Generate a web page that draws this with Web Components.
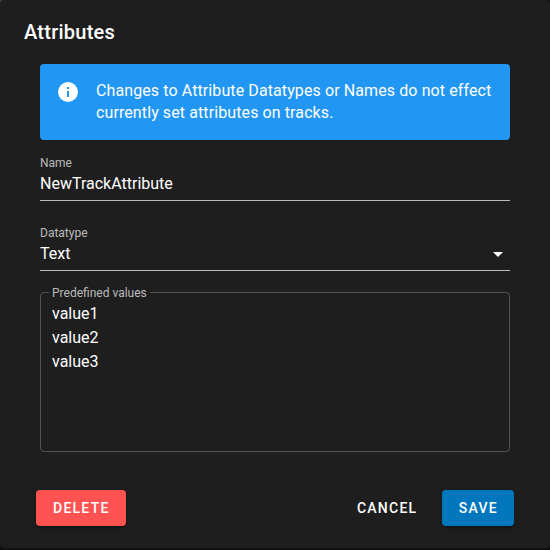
<!DOCTYPE html>
<html lang="en">
<head>
<meta charset="utf-8">
<title>Attributes</title>
<style>
html,body{margin:0;height:100%;overflow:hidden}
html{background:linear-gradient(#444,#444) 0 0/8px 8px no-repeat #110f11}
body{font:16px/24px Roboto,"Liberation Sans",sans-serif;color:#fff}
</style>
</head>
<body>
<attribute-dialog heading="Attributes">
  <info-alert>Changes to Attribute Datatypes or Names do not effect currently set attributes on tracks.</info-alert>
  <line-field label="Name">NewTrackAttribute</line-field>
  <line-field label="Datatype" dropdown>Text</line-field>
  <outlined-area label="Predefined values">value1
value2
value3</outlined-area>
  <flat-button slot="start" kind="danger">DELETE</flat-button>
  <flat-button slot="end" kind="text">CANCEL</flat-button>
  <flat-button slot="end" kind="primary">SAVE</flat-button>
</attribute-dialog>
<script>
class BaseElement extends HTMLElement {
  connectedCallback() {
    if (!this.shadowRoot) this.attachShadow({mode: 'open'}).innerHTML = this.render();
  }
}

customElements.define('attribute-dialog', class extends BaseElement {
  render() {
    return `<style>
      :host{display:flex;flex-direction:column;box-sizing:border-box;height:548px;background:#1e1e1e;border-radius:4px}
      h1{margin:0;padding:16px 24px 0;font-size:20px;line-height:32px;font-weight:500;letter-spacing:.25px}
      main{flex:1;padding:16px 40px 0}
      footer{display:flex;gap:8px;padding:0 36px 22px}
      .space{flex:1}
    </style>
    <h1>${this.getAttribute('heading')}</h1>
    <main><slot></slot></main>
    <footer><slot name="start"></slot><div class="space"></div><slot name="end"></slot></footer>`;
  }
});

customElements.define('info-alert', class extends BaseElement {
  render() {
    return `<style>
      :host{display:flex;gap:16px;box-sizing:border-box;height:76px;padding:16px;background:#2196f3;border-radius:4px;line-height:22px;letter-spacing:.1px}
      svg{flex:none;width:24px;height:24px;fill:#fff}
      p{margin:0;flex:1}
    </style>
    <svg viewBox="0 0 24 24"><path d="M13,9H11V7H13M13,17H11V11H13M12,2A10,10 0 0,0 2,12A10,10 0 0,0 12,22A10,10 0 0,0 22,12A10,10 0 0,0 12,2Z"/></svg>
    <p><slot></slot></p>`;
  }
});

customElements.define('line-field', class extends BaseElement {
  render() {
    const arrow = this.hasAttribute('dropdown')
      ? '<svg viewBox="0 0 24 24"><path d="M7,10L12,15L17,10H7Z"/></svg>' : '';
    return `<style>
      :host{display:block;box-sizing:border-box;height:70px;padding-top:15px}
      label{display:block;font-size:12px;line-height:16px;color:rgba(255,255,255,.7)}
      .row{display:flex;justify-content:space-between;align-items:center;box-sizing:border-box;height:30px;padding-bottom:4px;border-bottom:1px solid rgba(255,255,255,.7)}
      svg{width:24px;height:24px;fill:#fff}
    </style>
    <label>${this.getAttribute('label')}</label>
    <div class="row"><span><slot></slot></span>${arrow}</div>`;
  }
});

customElements.define('outlined-area', class extends BaseElement {
  render() {
    return `<style>
      :host{display:block;margin-top:5px}
      fieldset{box-sizing:border-box;height:167px;margin:0;padding:2px 11px 0;border:1px solid rgba(255,255,255,.24);border-radius:4px}
      legend{height:15px;margin-left:-3px;padding:0 3px;font-size:12px;line-height:16px;color:rgba(255,255,255,.7)}
      div{white-space:pre}
    </style>
    <fieldset><legend>${this.getAttribute('label')}</legend><div><slot></slot></div></fieldset>`;
  }
});

customElements.define('flat-button', class extends BaseElement {
  render() {
    return `<style>
      :host{display:block}
      button{display:block;box-sizing:border-box;height:36px;padding:0 16px 0 17px;border:0;border-radius:4px;background:none;color:#fff;font:500 14px/36px Roboto,"Liberation Sans",sans-serif;letter-spacing:1.25px;box-shadow:0 3px 1px -2px rgba(0,0,0,.2),0 2px 2px rgba(0,0,0,.14),0 1px 5px rgba(0,0,0,.12)}
      :host([kind=danger]) button{background:#ff5252}
      :host([kind=primary]) button{background:#0277bd}
      :host([kind=text]) button{padding:0 16.5px;box-shadow:none}
    </style>
    <button><slot></slot></button>`;
  }
});
</script>
</body>
</html>
